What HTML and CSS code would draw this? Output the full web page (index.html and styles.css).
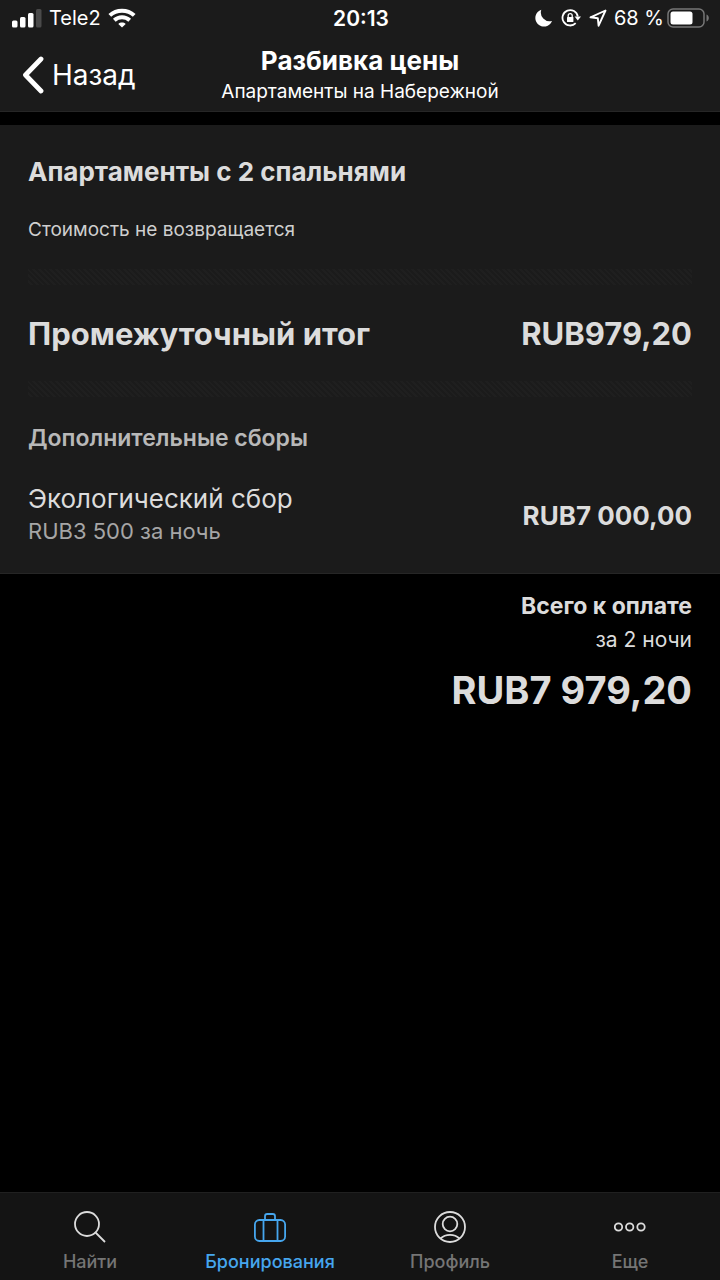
FILE: index.html
```html
<!DOCTYPE html>
<html lang="ru">
<head>
<meta charset="utf-8">
<meta name="viewport" content="width=device-width, initial-scale=1">
<title>Разбивка цены</title>
<link rel="stylesheet" href="styles.css">
</head>
<body>
<div class="app">
  <header class="header">
    <div class="status">
      <div class="status-left">
        <svg width="30" height="20" viewBox="0 0 30 20" fill="#fff" aria-hidden="true">
          <rect x="0" y="12.500" width="5.500" height="7" rx="1.500"/>
          <rect x="8" y="9" width="5.500" height="10.500" rx="1.500"/>
          <rect x="16" y="5" width="5.500" height="14.500" rx="1.500"/>
          <rect x="24" y="1" width="5.500" height="18.500" rx="1.500" fill="#4a4a4a"/>
        </svg>
        <span>Tele2</span>
        <svg width="28" height="20" viewBox="0 0 28 20" fill="none" stroke="#fff" stroke-width="4" aria-hidden="true">
          <path d="M1.800 7.400C8.600 1.100 19.400 1.100 26.200 7.400"/>
          <path d="M6.300 12.300C10.700 8.300 17.300 8.300 21.700 12.300"/>
          <path d="M14 19.600L10.300 15.900C12.400 14.100 15.600 14.100 17.700 15.900Z" fill="#fff" stroke="none"/>
        </svg>
      </div>
      <time class="status-time">20:13</time>
      <div class="status-right">
        <svg width="18" height="18" viewBox="0 0 18 18" fill="#fff" aria-hidden="true">
          <path d="M6.300 0.800A8.600 8.600 0 1 0 17 12A8.800 8.800 0 0 1 6.300 0.800Z"/>
        </svg>
        <svg class="icon-lock" width="20" height="18" viewBox="0 0 20 18" fill="none" stroke="#fff" aria-hidden="true">
          <path d="M16.800 7.500A7.700 7.700 0 1 0 14.700 14.200" stroke-width="1.800"/>
          <path d="M13.600 7.600H20L16.800 11.600Z" fill="#fff" stroke="none"/>
          <rect x="6" y="8" width="6.400" height="5" rx="0.600" fill="#fff" stroke="none"/>
          <path d="M7.200 8.500V6.600A2 2 0 0 1 11.200 6.600V8.500" stroke-width="1.300"/>
        </svg>
        <svg class="icon-arrow" width="18" height="18" viewBox="0 0 18 18" fill="none" stroke="#fff" stroke-width="1.900" stroke-linejoin="round" aria-hidden="true">
          <path d="M16.500 1.500L1.500 8.300L8.800 9.200L9.600 16.700Z"/>
        </svg>
        <span class="status-percent">68 %</span>
        <svg width="43" height="20" viewBox="0 0 43 20" aria-hidden="true">
          <rect x="1" y="1" width="36" height="18" rx="5" fill="none" stroke="#777" stroke-width="1.500"/>
          <rect x="3.500" y="3.500" width="22" height="13" rx="2.500" fill="#fff"/>
          <path d="M39.500 6.500C42.600 7.800 42.600 12.200 39.500 13.500Z" fill="#777"/>
        </svg>
      </div>
    </div>
    <div class="nav">
      <button class="back" type="button">
        <svg width="22" height="38" viewBox="0 0 22 38" fill="none" stroke="#fff" stroke-width="4.800" stroke-linecap="round" stroke-linejoin="round" aria-hidden="true">
          <path d="M19 3L3.500 19L19 35"/>
        </svg>
        <span>Назад</span>
      </button>
      <div class="nav-titles">
        <h1 class="nav-title">Разбивка цены</h1>
        <p class="nav-subtitle">Апартаменты на Набережной</p>
      </div>
    </div>
  </header>

  <main class="content">
    <section class="card">
      <h2 class="room">Апартаменты с 2 спальнями</h2>
      <p class="policy">Стоимость не возвращается</p>
      <div class="hatch"></div>
      <div class="row subtotal">
        <span>Промежуточный итог</span>
        <span>RUB979,20</span>
      </div>
      <div class="hatch"></div>
      <h3 class="extras">Дополнительные сборы</h3>
      <div class="row">
        <div>
          <p class="fee-name">Экологический сбор</p>
          <p class="fee-note">RUB3 500 за ночь</p>
        </div>
        <span class="fee-price">RUB7 000,00</span>
      </div>
    </section>
    <section class="total">
      <p class="total-label">Всего к оплате</p>
      <p class="total-nights">за 2 ночи</p>
      <p class="total-price">RUB7 979,20</p>
    </section>
  </main>

  <nav class="tabs">
    <a class="tab" href="#search">
      <svg width="32" height="32" viewBox="0 0 32 32" aria-hidden="true">
        <circle cx="13" cy="13" r="12"/><path d="M21.500 21.500L31 31"/>
      </svg>
      <span>Найти</span>
    </a>
    <a class="tab tab-active" href="#bookings" aria-current="page">
      <svg width="32" height="32" viewBox="0 0 32 32" aria-hidden="true">
        <rect x="0.900" y="9" width="30.200" height="21" rx="4.500"/>
        <path d="M9.500 9V30M23.500 9V30M11 9V5.300Q11 3 13.300 3H18.700Q21 3 21 5.300V9"/>
      </svg>
      <span>Бронирования</span>
    </a>
    <a class="tab" href="#profile">
      <svg width="32" height="32" viewBox="0 0 32 32" aria-hidden="true">
        <circle cx="16" cy="16" r="15"/><circle cx="16" cy="13" r="7.300"/><path d="M6.500 27.500C11.500 22.700 20.500 22.700 25.500 27.500"/>
      </svg>
      <span>Профиль</span>
    </a>
    <a class="tab" href="#more">
      <svg width="32" height="32" viewBox="0 0 32 32" aria-hidden="true">
        <circle cx="4.500" cy="16" r="3.700"/><circle cx="15.700" cy="16" r="3.700"/><circle cx="27" cy="16" r="3.700"/>
      </svg>
      <span>Еще</span>
    </a>
  </nav>
</div>
</body>
</html>
```
FILE: styles.css
```css
* {
  box-sizing: border-box;
}

body,
h1,
h2,
h3,
p {
  margin: 0;
}

body {
  background: #000;
  color: #dcdcdc;
  font-family: Inter, "Liberation Sans", sans-serif;
}

.app {
  display: flex;
  flex-direction: column;
  min-height: 100vh;
}

.header {
  background: #1b1b1b;
  border-bottom: 1px solid #262626;
  color: #fff;
}

.status {
  display: grid;
  grid-template-columns: 1fr auto 1fr;
  align-items: center;
  height: 36px;
  padding: 0 10px 0 12px;
  font-size: 20px;
}

.status-left,
.status-right {
  display: flex;
  align-items: center;
}

.status-left {
  gap: 7px;
}

.status-right {
  justify-content: flex-end;
}

.status-time {
  font-size: 21px;
  font-weight: 600;
}

.icon-lock {
  margin-left: 8px;
}

.icon-arrow {
  margin: 0 7px 0 8px;
}

.status-percent {
  margin-right: 3px;
}

.nav {
  display: grid;
  grid-template-columns: 1fr auto 1fr;
  align-items: center;
  padding: 8px 22px 5px;
}

.back {
  display: flex;
  align-items: center;
  justify-self: start;
  gap: 8px;
  padding: 0;
  border: 0;
  background: none;
  color: inherit;
  font: inherit;
  font-size: 28px;
}

.nav-titles {
  text-align: center;
}

.nav-title {
  font-size: 26px;
  font-weight: 700;
  line-height: 34px;
}

.nav-subtitle {
  font-size: 19px;
  line-height: 28px;
}

.content {
  flex: 1;
  padding-top: 13px;
}

.card {
  padding: 31px 28px 26px;
  background: #1b1b1b;
  border-bottom: 1px solid #262626;
}

.room {
  font-size: 26px;
  font-weight: 700;
  line-height: 32px;
}

.policy {
  margin-top: 30px;
  color: #cfcfcf;
  font-size: 19px;
  line-height: 24px;
}

.hatch {
  height: 16px;
  margin: 27px 0;
  background: repeating-linear-gradient(45deg, #1b1b1b 0 2px, #1f1f1f 2px 4px);
}

.row {
  display: flex;
  align-items: center;
  justify-content: space-between;
}

.subtotal {
  padding-top: 2px;
  font-size: 31px;
  font-weight: 700;
  line-height: 40px;
}

.extras {
  margin-bottom: 31px;
  color: #b8b8b8;
  font-size: 23px;
  font-weight: 600;
  line-height: 28px;
}

.fee-name {
  font-size: 26px;
  line-height: 32px;
}

.fee-note {
  color: #a6a6a6;
  font-size: 22px;
  line-height: 32px;
}

.fee-price {
  font-size: 26px;
  font-weight: 700;
}

.total {
  padding: 18px 28px;
  text-align: right;
}

.total-label {
  font-size: 23px;
  font-weight: 700;
  line-height: 28px;
}

.total-nights {
  margin: 6px 0 12px;
  font-size: 21px;
  line-height: 28px;
}

.total-price {
  font-size: 38px;
  font-weight: 700;
  line-height: 48px;
}

.tabs {
  display: grid;
  grid-template-columns: repeat(4, 1fr);
  background: #141414;
  border-top: 1px solid #202020;
}

.tab {
  display: flex;
  flex-direction: column;
  align-items: center;
  gap: 9px;
  padding: 18px 0 8px;
  color: #757575;
  font-size: 18px;
  font-weight: 500;
  line-height: 20px;
  text-decoration: none;
}

.tab svg {
  fill: none;
  stroke: #dcdcdc;
  stroke-width: 1.8;
}

.tab-active {
  color: #46a6ee;
}

.tab-active svg {
  stroke: #46a6ee;
}
```
